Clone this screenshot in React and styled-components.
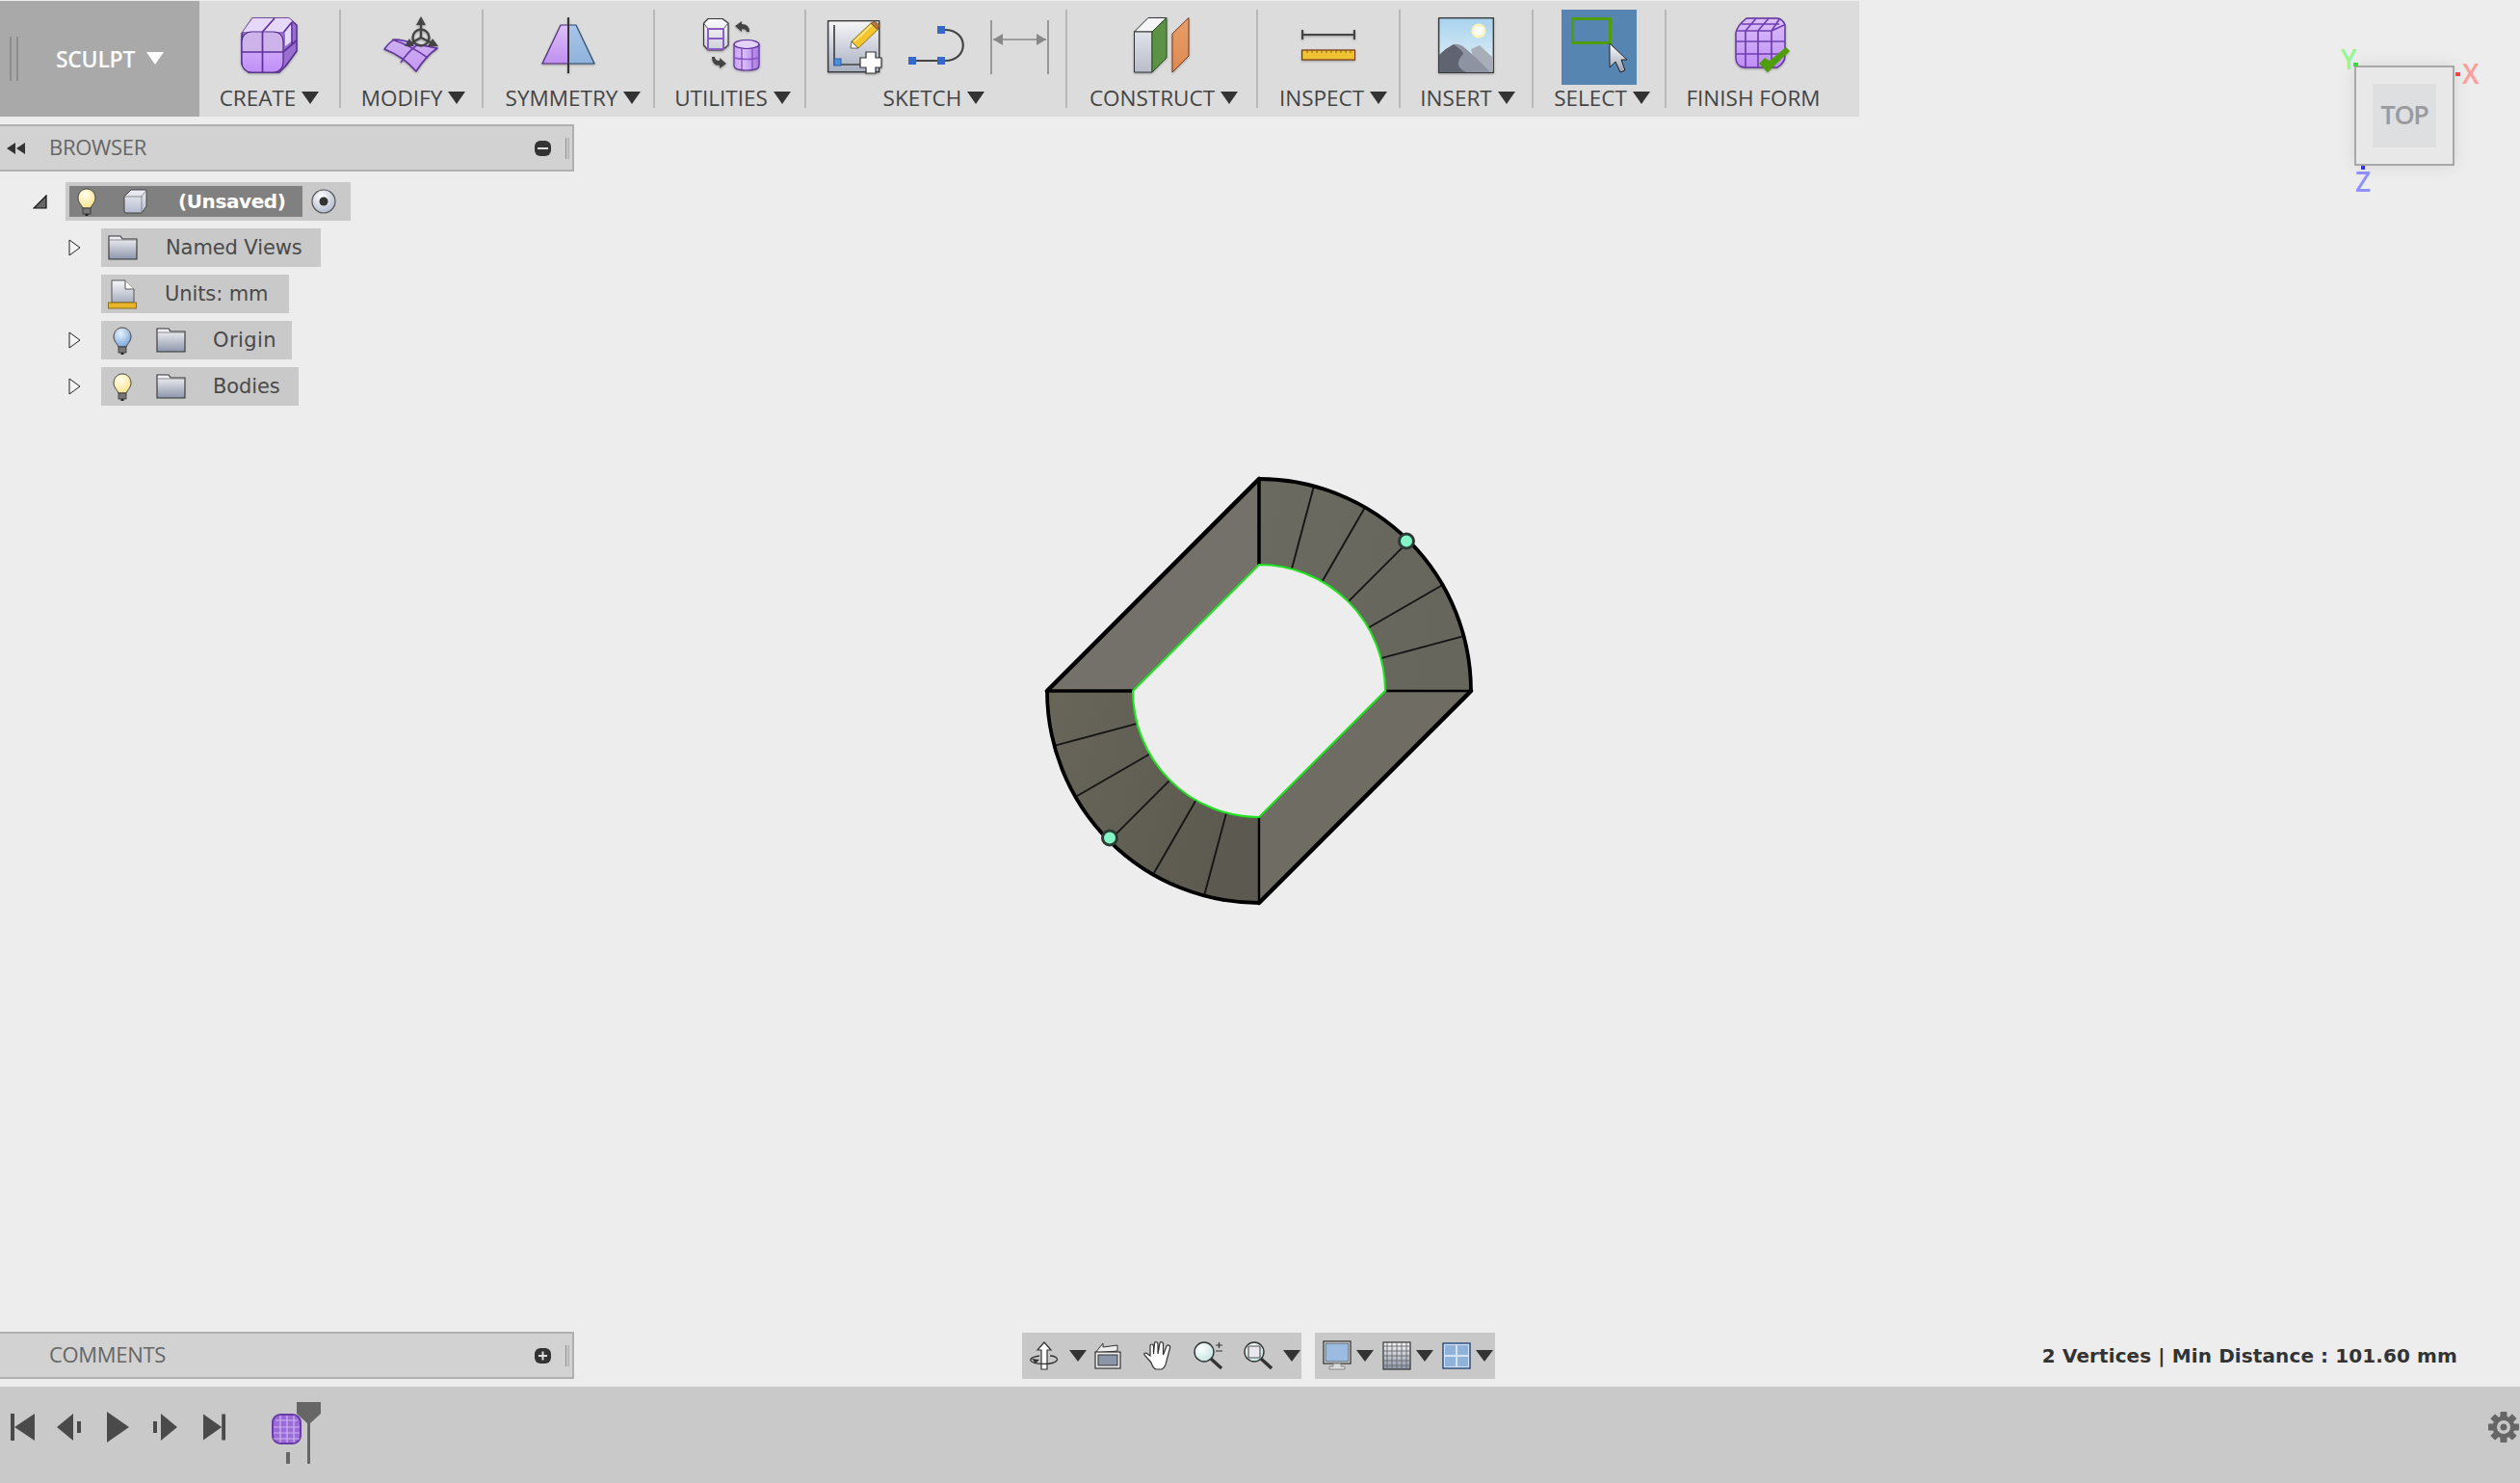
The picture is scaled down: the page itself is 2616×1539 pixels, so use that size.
import React from "react";
import styled, { createGlobalStyle } from "styled-components";

const Global = createGlobalStyle`
  html, body { margin: 0; padding: 0; background: #ededed; }
  #root { width: 2616px; height: 1539px; overflow: hidden; }
`;

const UI = `"Open Sans", "Noto Sans", "Liberation Sans", sans-serif`;
const TREE = `"DejaVu Sans", "Open Sans", sans-serif`;

const Page = styled.div`
  position: relative;
  width: 2616px;
  height: 1539px;
  display: flex;
  flex-direction: column;
  background: #ededed;
  overflow: hidden;
  font-family: ${UI};
`;
const Toolbar = styled.div`
  margin-top: 1px;
  width: 1930px;
  height: 120px;
  flex: none;
  display: flex;
  background: #dcdcdc;
`;
const WorkspaceTab = styled.div`
  width: 207px;
  display: flex;
  align-items: center;
  background: #a9a9a9;
  padding: 0 0 1px 10px;
  box-sizing: border-box;
`;
const Grip = styled.div`
  width: 5px;
  height: 46px;
  border-left: 2px solid #8d8d8d;
  border-right: 2px solid #8d8d8d;
  margin-right: 39px;
`;
const TabLabel = styled.span`
  color: #fff;
  font-size: 23px;
  font-weight: 600;
  letter-spacing: -0.3px;
  white-space: nowrap;
`;
const TabCaret = styled.span`
  width: 0;
  height: 0;
  margin-left: 12px;
  border-left: 9px solid transparent;
  border-right: 9px solid transparent;
  border-top: 13px solid #fff;
`;
const Group = styled.div`
  width: ${(p) => p.$w}px;
  margin: 9px 0;
  box-sizing: border-box;
  display: flex;
  flex-direction: column;
  align-items: center;
  border-right: ${(p) => (p.$last ? "0" : "2px solid #b8b8b8")};
`;
const IconRow = styled.div`
  height: 80px;
  box-sizing: border-box;
  padding-top: ${(p) => p.$top ?? 8}px;
  padding-left: ${(p) => p.$left ?? 0}px;
  display: flex;
  justify-content: center;
  align-items: flex-start;
  gap: ${(p) => p.$gap ?? 0}px;
`;
const CurveSlot = styled.span`
  display: flex;
  flex: none;
  margin-top: 5px;
`;
const SelectTile = styled.div`
  width: 78px;
  height: 78px;
  background: #5585b0;
`;
const GroupLabel = styled.div`
  display: flex;
  align-items: center;
  height: 22px;
  margin-left: ${(p) => p.$nudge || 0}px;
  margin-right: ${(p) => p.$shift || 0}px;
  color: #444;
  font-size: 22.5px;
  white-space: nowrap;
`;
const Caret = styled.span`
  width: 0;
  height: 0;
  margin-left: 6px;
  border-left: 9px solid transparent;
  border-right: 9px solid transparent;
  border-top: 13px solid #333;
`;
const Ico = styled.svg`
  flex: none;
  filter: drop-shadow(0 1px 1px rgba(0, 0, 0, 0.3));
`;
const Main = styled.div`
  flex: 1;
  display: flex;
  flex-direction: column;
  justify-content: space-between;
`;
const Panel = styled.div`
  width: 596px;
  height: 49px;
  box-sizing: border-box;
  display: flex;
  align-items: center;
  background: #d2d2d2;
  border: 2px solid #b0b0b0;
  border-left: 0;
  color: #666;
  font-size: 22px;
  letter-spacing: -0.3px;
`;
const PanelLead = styled.div`
  width: 51px;
  display: flex;
  padding-left: 7px;
  box-sizing: border-box;
`;
const PanelTitle = styled.span`
  flex: 1;
  padding-bottom: ${(p) => p.$lift || 3}px;
`;
const PanelGrip = styled.div`
  width: 1px;
  height: 22px;
  margin: 0 3px 0 15px;
  border-left: 1px solid #8f8f8f;
  border-right: 2px solid #b8b8b8;
`;
const BrowserWrap = styled.div`
  margin-top: 8px;
`;
const Tree = styled.div`
  display: flex;
  flex-direction: column;
  gap: 8px;
  padding-top: 11px;
  font-family: ${TREE};
`;
const TreeRow = styled.div`
  height: 40px;
  display: flex;
  align-items: center;
  padding-left: ${(p) => p.$indent}px;
`;
const Expander = styled.div`
  width: 34px;
  flex: none;
  display: flex;
  align-items: center;
`;
const Chip = styled.div`
  height: 40px;
  display: flex;
  align-items: center;
  box-sizing: border-box;
  background: #c9c9c9;
  padding: ${(p) => p.$pad || "0 20px 0 7px"};
  color: #4a4a4a;
  font-size: 21px;
  letter-spacing: ${(p) => p.$ls ?? -0.1}px;
`;
const ActiveChip = styled.div`
  width: 242px;
  height: 32px;
  display: flex;
  align-items: center;
  box-sizing: border-box;
  padding-left: 8px;
  background: #808080;
  color: #fff;
  font-weight: 700;
  font-size: 20px;
  letter-spacing: -0.4px;
  margin-right: 9px;
`;
const Gap = styled.span`
  display: inline-block;
  flex: none;
  width: ${(p) => p.$w}px;
`;
const BottomRow = styled.div`
  height: 49px;
  margin-bottom: 8px;
  display: flex;
  align-items: center;
`;
const NavStrip = styled.div`
  height: 48px;
  margin-left: ${(p) => p.$ml}px;
  padding: 0 ${(p) => p.$pr || 0}px 0 ${(p) => p.$pl}px;
  display: flex;
  align-items: center;
  background: #c8c8c8;
`;
const NavCaret = styled.span`
  flex: none;
  width: 0;
  height: 0;
  margin-left: ${(p) => p.$ml}px;
  border-left: 9px solid transparent;
  border-right: 9px solid transparent;
  border-top: 12px solid #333;
`;
const NavIcon = styled.span`
  display: flex;
  flex: none;
  margin-left: ${(p) => p.$ml || 0}px;
`;
const Status = styled.div`
  margin-left: auto;
  margin-right: 65px;
  color: #333;
  font-family: ${TREE};
  font-weight: 700;
  font-size: 20px;
  letter-spacing: 0.1px;
  white-space: nowrap;
`;
const Footer = styled.div`
  height: 100px;
  flex: none;
  display: flex;
  align-items: flex-start;
  box-sizing: border-box;
  padding: 26px 1px 0 11px;
  background: #c9c9c9;
`;
const Transport = styled.div`
  width: ${(p) => p.$w}px;
  height: 32px;
  display: flex;
  align-items: center;
`;
const TimelineTrack = styled.div`
  position: relative;
  margin-left: 47px;
  margin-top: 2px;
  width: 31px;
  height: 52px;
`;
const TimelineTick = styled.div`
  position: absolute;
  left: 15px;
  top: 40px;
  width: 4px;
  height: 12px;
  background: #666;
`;
const Marker = styled.div`
  position: absolute;
  left: 26px;
  top: -12px;
`;
const GearWrap = styled.div`
  margin-left: auto;
`;
const Model = styled.svg`
  position: absolute;
  left: 1080px;
  top: 490px;
`;
const HiddenDefs = styled.svg`
  position: absolute;
`;
const ViewCube = styled.div`
  position: absolute;
  left: 2444px;
  top: 68px;
  width: 104px;
  height: 104px;
  box-sizing: border-box;
  display: flex;
  align-items: center;
  justify-content: center;
  border: 2px solid #a8a8a8;
  background: #e8e8e8;
  box-shadow: 0 0 16px rgba(0, 0, 0, 0.1);
`;
const CubeFace = styled.div`
  width: 66px;
  height: 66px;
  box-sizing: border-box;
  padding-bottom: 3px;
  display: flex;
  align-items: center;
  justify-content: center;
  background: #dddfe1;
  color: #999b9d;
  font-size: 27px;
  font-weight: 600;
  letter-spacing: -1.4px;
`;
const Axis = styled.span`
  position: absolute;
  left: ${(p) => p.$x}px;
  top: ${(p) => p.$y}px;
  color: ${(p) => p.$c};
  font-size: 28px;
  line-height: 28px;
  font-weight: 600;
`;
const AxisTick = styled.i`
  position: absolute;
  left: ${(p) => p.$x}px;
  top: ${(p) => p.$y}px;
  width: ${(p) => p.$w}px;
  height: ${(p) => p.$h}px;
  background: ${(p) => p.$c};
`;

const Defs = () => (
  <HiddenDefs width="0" height="0">
    <defs>
      <linearGradient id="pv" x1="0" y1="0" x2="0" y2="1">
        <stop offset="0" stopColor="#d9bffa" />
        <stop offset="1" stopColor="#c08ef8" />
      </linearGradient>
      <linearGradient id="pcyl" x1="0" y1="0" x2="1" y2="0">
        <stop offset="0" stopColor="#c79cf6" />
        <stop offset="0.35" stopColor="#dcc2fb" />
        <stop offset="1" stopColor="#a877e4" />
      </linearGradient>
      <linearGradient id="surf" x1="0" y1="0" x2="0" y2="1">
        <stop offset="0" stopColor="#ceb2f0" />
        <stop offset="1" stopColor="#c596f2" />
      </linearGradient>
      <linearGradient id="white" x1="0" y1="0" x2="0" y2="1">
        <stop offset="0" stopColor="#fbfbfc" />
        <stop offset="1" stopColor="#cdd0d9" />
      </linearGradient>
      <linearGradient id="folder" x1="0" y1="0" x2="0" y2="1">
        <stop offset="0" stopColor="#f8f8fa" />
        <stop offset="1" stopColor="#8d96ab" />
      </linearGradient>
      <linearGradient id="paper" x1="0" y1="0" x2="0" y2="1">
        <stop offset="0" stopColor="#f7f7f9" />
        <stop offset="1" stopColor="#a7aec0" />
      </linearGradient>
      <linearGradient id="cube" x1="0" y1="0" x2="0" y2="1">
        <stop offset="0" stopColor="#eef0f5" />
        <stop offset="1" stopColor="#b4bccd" />
      </linearGradient>
      <linearGradient id="front" x1="0" y1="0" x2="0" y2="1">
        <stop offset="0" stopColor="#e0e3e9" />
        <stop offset="1" stopColor="#b8bdca" />
      </linearGradient>
      <linearGradient id="orange" x1="0" y1="0" x2="0" y2="1">
        <stop offset="0" stopColor="#ea9e68" />
        <stop offset="1" stopColor="#dd8a52" />
      </linearGradient>
      <linearGradient id="sky" x1="0" y1="0" x2="0" y2="1">
        <stop offset="0" stopColor="#a9d3ee" />
        <stop offset="1" stopColor="#e6f2f8" />
      </linearGradient>
      <linearGradient id="cursor" x1="0" y1="0" x2="0" y2="1">
        <stop offset="0" stopColor="#ffffff" />
        <stop offset="1" stopColor="#98a1b0" />
      </linearGradient>
      <linearGradient id="symL" x1="0" y1="0" x2="0" y2="1">
        <stop offset="0" stopColor="#dcc0f8" />
        <stop offset="1" stopColor="#c08ff0" />
      </linearGradient>
      <linearGradient id="symR" x1="0" y1="0" x2="0" y2="1">
        <stop offset="0" stopColor="#a9c5e8" />
        <stop offset="1" stopColor="#8fb3dc" />
      </linearGradient>
      <radialGradient id="yb" cx="0.4" cy="0.3" r="0.7">
        <stop offset="0" stopColor="#fffdf0" />
        <stop offset="1" stopColor="#fbe58f" />
      </radialGradient>
      <radialGradient id="bb" cx="0.4" cy="0.3" r="0.7">
        <stop offset="0" stopColor="#e9f2fb" />
        <stop offset="1" stopColor="#7da9dc" />
      </radialGradient>
      <radialGradient id="radio" cx="0.4" cy="0.3" r="0.8">
        <stop offset="0" stopColor="#ffffff" />
        <stop offset="1" stopColor="#aab2c6" />
      </radialGradient>
      <radialGradient id="lens" cx="0.35" cy="0.3" r="0.8">
        <stop offset="0" stopColor="#ffffff" />
        <stop offset="1" stopColor="#bfe3dd" />
      </radialGradient>
    </defs>
  </HiddenDefs>
);

const CreateIcon = () => (
  <Ico width="59" height="58" viewBox="0 0 59 58">
    <path d="M12 1H50L58 8V35L47 50L40 57H8L1 48V17Z" fill="#9a6ecf" stroke="#4e2a86" strokeWidth="1.4" strokeLinejoin="round" />
    <path d="M12 1H50Q54 3 54 8V24L46 30V18Q46 15 42 15H4Q2 15 1.500 16Z" fill="#e6d8fa" />
    <rect x="1" y="15" width="43" height="42" rx="10" fill="url(#pv)" stroke="#4e2a86" strokeWidth="1.2" />
    <path d="M3 25Q3 16 12 16H34Q43 16 43 25V36H3Z" fill="#cdb3ea" />
    <path d="M1 36H44L58 24M22.500 15V57M22.500 15L35 1M44 16L53 5M53 5V29" fill="none" stroke="#5d2f99" strokeWidth="1.7" />
  </Ico>
);
const ModifyIcon = () => (
  <Ico width="58" height="58" viewBox="0 0 58 58">
    <path d="M1 34Q5 28 11 24Q20 24 30 28Q45 31 56 33Q45 40 34 57Q20 41 1 34Z" fill="url(#surf)" stroke="#5d2f99" strokeWidth="1.5" strokeLinejoin="round" />
    <path d="M9 24Q28 30 46 43M36 29Q26 36 18 48" fill="none" stroke="#6b3aa8" strokeWidth="1.6" />
    <g fill="none" stroke="#444" strokeWidth="2.4">
      <circle cx="39" cy="22" r="8.500" />
      <path d="M39 6V22L28 28M39 22L51 28" />
    </g>
    <g fill="#444">
      <path d="M39 0L44 9H34Z" />
      <path d="M22 31L27 23L32 31Z" />
      <path d="M57 31L46 31L51 23Z" />
    </g>
  </Ico>
);
const SymmetryIcon = () => (
  <Ico width="56" height="58" viewBox="0 0 56 58">
    <path d="M20 8H28V48H1Z" fill="url(#symL)" stroke="#4b2a7a" strokeWidth="1.2" />
    <path d="M36 8H28V48H55Z" fill="url(#symR)" stroke="#2e4a70" strokeWidth="1.2" />
    <rect x="27" y="0" width="2" height="58" fill="#333" />
  </Ico>
);
const UtilitiesIcon = () => (
  <Ico width="59" height="56" viewBox="0 0 59 56">
    <path d="M5 0.500H20L26 5V28L20 33H5L0.500 28V5Z" fill="url(#white)" stroke="#333" strokeWidth="1.2" />
    <path d="M0.500 5L5 11H21L26 5M5 11V33M21 11V33" fill="none" stroke="#555" strokeWidth="1" />
    <path d="M5 11H21V32H5ZM5 21H21" fill="none" stroke="#8b5cc4" strokeWidth="1.8" />
    <path d="M32 27V49Q32 54 45 54Q58 54 58 49V27Z" fill="url(#pcyl)" stroke="#5d2f99" strokeWidth="1.2" />
    <ellipse cx="45" cy="27" rx="13" ry="4.500" fill="#e3d2fa" stroke="#5d2f99" strokeWidth="1.2" />
    <path d="M32 41Q45 44 58 41M40 30V53M51 30V53" fill="none" stroke="#8a55c6" strokeWidth="1.5" />
    <path d="M33 8L40 3V6Q48 6 48 14H45Q45 11 40 11V14Z" fill="#444" />
    <path d="M24 47L17 52V49Q9 49 9 40H12Q12 44 17 44V41Z" fill="#444" />
  </Ico>
);
const SketchPaperIcon = () => (
  <Ico width="57" height="56" viewBox="0 0 57 56">
    <rect x="0.700" y="0.700" width="53" height="53" fill="url(#paper)" stroke="#333" strokeWidth="1.3" />
    <path d="M7 5V46H36" fill="none" stroke="#444" strokeWidth="1.7" />
    <rect x="7" y="40" width="7" height="7" fill="#4a90d8" stroke="#2f5fa8" strokeWidth="1" />
    <path d="M25 22L45 3L52 10L32 29Z" fill="#f4c52c" stroke="#7a5a10" strokeWidth="0.8" />
    <path d="M28 22L46 5" stroke="#fff0a0" strokeWidth="1.4" />
    <path d="M45 3L49 1L54 5L52 10Z" fill="#b5753f" stroke="#6e4522" strokeWidth="0.7" />
    <path d="M24 29L25 22L32 29Z" fill="#fbf6ea" stroke="#444" strokeWidth="0.8" />
    <path d="M40 33H50V39H56V49H50V55H40V49H34V39H40Z" fill="#fff" stroke="#333" strokeWidth="1.2" />
  </Ico>
);
const SketchCurveIcon = () => (
  <svg width="58" height="42" viewBox="0 0 58 42">
    <path d="M34 5H38C63 5 63 37 38 37H4" fill="none" stroke="#444" strokeWidth="2.200" />
    <rect x="30" y="1" width="8" height="8" fill="#3568c8" />
    <rect x="30" y="33" width="8" height="8" fill="#3568c8" />
    <rect x="0" y="33" width="8" height="8" fill="#3568c8" />
  </svg>
);
const SketchDimIcon = () => (
  <svg width="62" height="56" viewBox="0 0 62 56">
    <path d="M1 0V56M60 0V56M3 20H58" stroke="#888" strokeWidth="1.6" fill="none" />
    <path d="M3 20L13 14V26ZM58 20L48 14V26Z" fill="#888" />
  </svg>
);
const ConstructIcon = () => (
  <Ico width="58" height="58" viewBox="0 0 58 58">
    <path d="M0.500 15L15 0.500H34L19 15Z" fill="#f6f6f8" stroke="#333" strokeWidth="1" />
    <path d="M0.500 15H19V57H0.500Z" fill="url(#front)" stroke="#333" strokeWidth="1" />
    <path d="M19 15L34 0.500V42L19 57Z" fill="#5b9245" stroke="#2e5020" strokeWidth="1" />
    <path d="M40 17L57 0.500V40L40 57Z" fill="url(#orange)" stroke="#7a3a18" strokeWidth="1" />
  </Ico>
);
const InspectIcon = () => (
  <Ico width="56" height="32" viewBox="0 0 56 32">
    <path d="M1 0V10M55 0V10M1 5H55" stroke="#444" strokeWidth="2.200" fill="none" />
    <rect x="0.600" y="21" width="55" height="10" fill="#eec233" stroke="#7a3412" strokeWidth="1.2" />
    <path d="M6 21v3M11 21v3M16 21v3M21 21v3M26 21v3M31 21v3M36 21v3M41 21v3M46 21v3M51 21v3" stroke="#7a5a12" strokeWidth="0.9" />
  </Ico>
);
const InsertIcon = () => (
  <Ico width="58" height="58" viewBox="0 0 58 58">
    <rect x="0.700" y="0.700" width="56.600" height="56.600" fill="url(#sky)" stroke="#333" strokeWidth="1.3" />
    <circle cx="42" cy="14" r="7.500" fill="#fff4b8" />
    <circle cx="42" cy="14" r="5" fill="#ffffff" />
    <path d="M34 33L43 29L57 42V56H40Z" fill="#a8aeb8" />
    <path d="M1 39Q8 32 16 28Q22 27 28 32Q40 42 54 57H1Z" fill="#8d93a0" />
    <path d="M1 39Q8 32 16 28Q27 36 26 38Q20 44 21 50Q23 54 29 57H1Z" fill="#5f6470" />
  </Ico>
);
const SelectIcon = () => (
  <svg width="78" height="78" viewBox="0 0 78 78">
    <rect x="11.500" y="9.500" width="39" height="25" fill="none" stroke="#4f9d07" strokeWidth="3" />
    <path d="M50 35V60L56 54L61 65L66 63L62 52L68 52Z" fill="url(#cursor)" stroke="#222" strokeWidth="1" strokeLinejoin="round" />
  </svg>
);
const FinishIcon = () => (
  <Ico width="58" height="58" viewBox="0 0 58 58">
    <path d="M12 1H44Q50 2 52 8V40Q52 47 44 52H10Q1 51 1 42V16Q2 9 12 1Z" fill="url(#pv)" stroke="#5d2f99" strokeWidth="1.4" />
    <path d="M1 14H38V52M1 25H52M1 38H52M11 14V52M24 14V52M38 14L51 8M11 14L22 1M24 14L35 1M38 14L46 2M7 7H46" fill="none" stroke="#6f3fb0" strokeWidth="1.7" />
    <path d="M25 48L34 57L57 35L53 31L36 45L31 42Z" fill="#4f9d07" />
  </Ico>
);

const Bulb = ({ blue }) => (
  <svg width="20" height="29" viewBox="0 0 20 29">
    <path d="M10 1C4 1 1 6 1 11C1 15 5 18 6 21H14C15 18 19 15 19 11C19 6 16 1 10 1Z" fill={blue ? "url(#bb)" : "url(#yb)"} stroke="#444" strokeWidth="1" />
    <rect x="6" y="21" width="8" height="6" fill="#777" stroke="#333" strokeWidth="0.8" />
    <rect x="8.500" y="27" width="3" height="2" fill="#222" />
  </svg>
);
const Folder = () => (
  <svg width="31" height="26" viewBox="0 0 31 26">
    <path d="M1 1H13L15 4H30V25H1Z" fill="url(#folder)" stroke="#333" strokeWidth="1.1" />
    <path d="M1 5H30" stroke="#777" strokeWidth="0.8" />
  </svg>
);
const UnitsDoc = () => (
  <svg width="30" height="31" viewBox="0 0 30 31">
    <path d="M4 1H18L27 10V24H4Z" fill="url(#paper)" stroke="#555" strokeWidth="1" />
    <path d="M18 1V10H27" fill="#fff" stroke="#555" strokeWidth="1" />
    <rect x="0.500" y="24" width="29" height="6" fill="#e8b52a" stroke="#8b6d1d" strokeWidth="1" />
  </svg>
);
const Cube = () => (
  <svg width="25" height="26" viewBox="0 0 25 26">
    <path d="M8 1H24V18L19 25H3Q1 25 1 23V8Z" fill="url(#cube)" stroke="#444" strokeWidth="1" />
    <path d="M1 8H19V25M19 8L24 1" fill="none" stroke="#777" strokeWidth="0.8" />
  </svg>
);
const Radio = () => (
  <svg width="26" height="26" viewBox="0 0 26 26">
    <circle cx="13" cy="13" r="12" fill="url(#radio)" stroke="#555" strokeWidth="1.2" />
    <circle cx="13" cy="13" r="4.500" fill="#333" />
  </svg>
);
const Tri = () => (
  <svg width="13" height="18" viewBox="0 0 13 18">
    <path d="M1 1L12 9L1 17Z" fill="#f4f4f4" stroke="#222" strokeWidth="1" />
  </svg>
);
const TriOpen = () => (
  <svg width="15" height="15" viewBox="0 0 15 15">
    <path d="M14 1V14H1Z" fill="#666" stroke="#111" strokeWidth="1.2" />
  </svg>
);
const Rewind = () => (
  <svg width="19" height="12" viewBox="0 0 19 12">
    <path d="M0 6L9 0V12ZM10 6L19 0V12Z" fill="#333" />
  </svg>
);
const PillIcon = ({ plus }) => (
  <svg width="17" height="16" viewBox="0 0 17 16">
    <rect x="0" y="0" width="17" height="16" rx="6" fill="#333" />
    <path d={plus ? "M4 8H13M8.500 3.500V12.500" : "M3 8H14"} stroke="#ddd" strokeWidth="2" />
  </svg>
);

const OrbitIcon = () => (
  <svg width="30" height="30" viewBox="0 0 30 30">
    <path d="M15 1L22 9H18V29H12V9H8Z" fill="#fff" stroke="#333" strokeWidth="1.2" />
    <path d="M10 15C3 16 0 18 1 20C3 24 24 25 28 20C30 17 25 15 21 15" fill="none" stroke="#333" strokeWidth="1.3" />
    <path d="M6 23L2 18L10 19Z" fill="#333" />
  </svg>
);
const CameraIcon = () => (
  <svg width="28" height="28" viewBox="0 0 28 28">
    <path d="M1 11L9 1V5L24 3V9L1 11Z" fill="#eee" stroke="#333" strokeWidth="1" />
    <rect x="1" y="10" width="26" height="17" fill="#eee" stroke="#333" strokeWidth="1.2" />
    <rect x="4" y="13" width="20" height="11" fill="#8d96a8" stroke="#333" strokeWidth="1" />
  </svg>
);
const HandIcon = () => (
  <svg width="30" height="30" viewBox="0 0 30 30">
    <path d="M8 22L1 14Q0 12 3 12L7 15V5Q7 3 9 3Q10 3 10.500 5V13L11.500 2Q12 0 14 1Q15 1.500 15 3V13L17 2Q17.500 0 19.500 1Q21 2 20.500 4V14L24 5Q25 3 27 4.500Q28 5.500 27.500 7L24 20Q23 27 19 29H13Q10 28 8 22Z" fill="#fff" stroke="#333" strokeWidth="1.2" />
  </svg>
);
const ZoomIcon = () => (
  <svg width="31" height="30" viewBox="0 0 31 30">
    <circle cx="11" cy="11" r="10" fill="url(#lens)" stroke="#333" strokeWidth="1.4" />
    <path d="M18 18L29 28" stroke="#333" strokeWidth="3.400" />
    <path d="M23 4H30M26.500 1V7M23 10H30" stroke="#333" strokeWidth="1.2" fill="none" />
  </svg>
);
const FitIcon = () => (
  <svg width="30" height="30" viewBox="0 0 30 30">
    <circle cx="11" cy="11" r="10" fill="url(#lens)" stroke="#333" strokeWidth="1.4" />
    <rect x="5" y="5" width="12" height="12" rx="1" fill="#e8e8ee" stroke="#555" strokeWidth="1.2" />
    <path d="M18 18L29 28" stroke="#333" strokeWidth="3.400" />
  </svg>
);
const MonitorIcon = () => (
  <svg width="30" height="31" viewBox="0 0 30 31">
    <rect x="1" y="1" width="28" height="23" fill="#fff" stroke="#222" strokeWidth="1.2" />
    <rect x="3" y="3" width="24" height="19" fill="#9bbce0" stroke="#444" strokeWidth="0.8" />
    <path d="M11 24H19V27H23V30H7V27H11Z" fill="#ddd" stroke="#777" strokeWidth="0.8" />
  </svg>
);
const GridIcon = () => {
  const lines = [5, 10, 15, 20, 25];
  return (
    <svg width="30" height="30" viewBox="0 0 30 30">
      <rect x="1" y="1" width="28" height="28" fill="url(#folder)" stroke="#333" strokeWidth="1.2" />
      {lines.map((v) => (
        <path key={v} d={`M${v} 1V29M1 ${v}H29`} stroke="#666" strokeWidth="0.9" />
      ))}
    </svg>
  );
};
const LayoutIcon = () => (
  <svg width="30" height="28" viewBox="0 0 30 28">
    <rect x="1" y="1" width="28" height="26" fill="#d5e3f2" stroke="#25477a" strokeWidth="1.4" />
    <path d="M3 3H14V13H3ZM16 3H27V13H16ZM3 15H14V25H3ZM16 15H27V25H16Z" fill="#8fb2da" />
  </svg>
);

const TransportIcon = ({ d, w = 25, h = 28 }) => (
  <svg width={w} height={h} viewBox={`0 0 ${w} ${h}`}>
    <path d={d} fill="#4a4a4a" />
  </svg>
);
const MiniMesh = () => (
  <svg width="31" height="32" viewBox="0 0 31 32">
    <rect x="1" y="1" width="29" height="30" rx="8" fill="#9b6bd8" stroke="#6a3aa8" strokeWidth="2" />
    <path d="M4 7H27M2 14H29M2 20H29M2 26H29M9 2V30M16 2V30M23 2V30" stroke="#cdb4ef" strokeWidth="1.2" />
  </svg>
);
const MarkerIcon = () => (
  <svg width="25" height="64" viewBox="0 0 25 64">
    <path d="M0 0H25V12L14 22V64H11V22L0 12Z" fill="#666" />
  </svg>
);
const Gear = () => (
  <svg width="32" height="32" viewBox="0 0 32 32">
    {[0, 45, 90, 135].map((a) => (
      <rect key={a} x="12.500" y="0" width="7" height="32" rx="1" fill="#666" transform={`rotate(${a} 16 16)`} />
    ))}
    <circle cx="16" cy="16" r="11.500" fill="#666" />
    <circle cx="16" cy="16" r="7" fill="#c9c9c9" />
    <circle cx="16" cy="16" r="3.500" fill="#666" />
  </svg>
);

const CX = 1307;
const CY = 717;
const R1 = 131;
const R2 = 220;
const spokes = [15, 30, 45, 60, 75, 195, 210, 225, 240, 255].map((a) => {
  const r = (a * Math.PI) / 180;
  return {
    a,
    x1: CX + R1 * Math.sin(r),
    y1: CY - R1 * Math.cos(r),
    x2: CX + R2 * Math.sin(r),
    y2: CY - R2 * Math.cos(r),
  };
});

const ModelView = () => (
  <Model width="455" height="455" viewBox="1080 490 455 455">
    <defs>
      <linearGradient id="armA" x1="0" y1="0" x2="1" y2="0.2">
        <stop offset="0" stopColor="#6b6a60" />
        <stop offset="1" stopColor="#67665c" />
      </linearGradient>
      <linearGradient id="armB" x1="0" y1="0" x2="1" y2="0.3">
        <stop offset="0" stopColor="#686659" />
        <stop offset="1" stopColor="#5c5a50" />
      </linearGradient>
    </defs>
    <path d={`M${CX} ${CY - R2}A${R2} ${R2} 0 0 1 ${CX + R2} ${CY}H${CX + R1}A${R1} ${R1} 0 0 0 ${CX} ${CY - R1}Z`} fill="url(#armA)" />
    <path d={`M${CX} ${CY + R2}A${R2} ${R2} 0 0 1 ${CX - R2} ${CY}H${CX - R1}A${R1} ${R1} 0 0 0 ${CX} ${CY + R1}Z`} fill="url(#armB)" />
    <path d={`M${CX} ${CY - R2}L${CX - R2} ${CY}H${CX - R1}L${CX} ${CY - R1}Z`} fill="#74716a" />
    <path d={`M${CX} ${CY + R2}L${CX + R2} ${CY}H${CX + R1}L${CX} ${CY + R1}Z`} fill="#6f6c63" />
    {spokes.map((s) => (
      <line key={s.a} x1={s.x1} y1={s.y1} x2={s.x2} y2={s.y2} stroke="#151515" strokeWidth="1.9" />
    ))}
    <path d={`M${CX} ${CY - R2}V${CY - R1}M${CX - R2} ${CY}H${CX - R1}`} stroke="#000" strokeWidth="3.500" />
    <path d={`M${CX} ${CY + R2}V${CY + R1}M${CX + R2} ${CY}H${CX + R1}`} stroke="#000" strokeWidth="2.400" />
    <path d={`M${CX} ${CY - R2}L${CX - R2} ${CY}M${CX} ${CY + R2}L${CX + R2} ${CY}`} fill="none" stroke="#000" strokeWidth="4.500" strokeLinecap="round" />
    <path d={`M${CX} ${CY - R2}A${R2} ${R2} 0 0 1 ${CX + R2} ${CY}M${CX} ${CY + R2}A${R2} ${R2} 0 0 1 ${CX - R2} ${CY}`} fill="none" stroke="#000" strokeWidth="3.800" />
    <path d={`M${CX} ${CY - R1}A${R1} ${R1} 0 0 1 ${CX + R1} ${CY}L${CX} ${CY + R1}A${R1} ${R1} 0 0 1 ${CX - R1} ${CY}Z`} fill="#ededed" stroke="#1fe31f" strokeWidth="2.100" />
    {[[1460, 561.5], [1152, 869.5]].map(([x, y]) => (
      <circle key={x} cx={x} cy={y} r="7.500" fill="#84f5c6" stroke="#2c3a34" strokeWidth="3" />
    ))}
  </Model>
);

export default function App() {
  return (
    <Page>
      <Global />
      <Defs />
      <Toolbar>
        <WorkspaceTab>
          <Grip />
          <TabLabel>SCULPT</TabLabel>
          <TabCaret />
        </WorkspaceTab>
        <Group $w={147}><IconRow><CreateIcon /></IconRow><GroupLabel>CREATE<Caret /></GroupLabel></Group>
        <Group $w={148}><IconRow $top={7}><ModifyIcon /></IconRow><GroupLabel $nudge={4}>MODIFY<Caret /></GroupLabel></Group>
        <Group $w={178}><IconRow><SymmetryIcon /></IconRow><GroupLabel $nudge={10}>SYMMETRY<Caret /></GroupLabel></Group>
        <Group $w={157}><IconRow $left={3} $top={9}><UtilitiesIcon /></IconRow><GroupLabel $nudge={6}>UTILITIES<Caret /></GroupLabel></Group>
        <Group $w={271}>
          <IconRow $top={11} $left={5} $gap={27}>
            <SketchPaperIcon />
            <CurveSlot><SketchCurveIcon /></CurveSlot>
            <SketchDimIcon />
          </IconRow>
          <GroupLabel $shift={4}>SKETCH<Caret /></GroupLabel>
        </Group>
        <Group $w={198}><IconRow><ConstructIcon /></IconRow><GroupLabel $nudge={4}>CONSTRUCT<Caret /></GroupLabel></Group>
        <Group $w={148}><IconRow $top={21}><InspectIcon /></IconRow><GroupLabel $nudge={10}>INSPECT<Caret /></GroupLabel></Group>
        <Group $w={138}><IconRow><InsertIcon /></IconRow><GroupLabel $nudge={3}>INSERT<Caret /></GroupLabel></Group>
        <Group $w={138}><IconRow $top={0}><SelectTile><SelectIcon /></SelectTile></IconRow><GroupLabel $nudge={6}>SELECT<Caret /></GroupLabel></Group>
        <Group $w={200} $last><IconRow><FinishIcon /></IconRow><GroupLabel $shift={20}>FINISH FORM</GroupLabel></Group>
      </Toolbar>

      <Main>
        <BrowserWrap>
          <Panel>
            <PanelLead><Rewind /></PanelLead>
            <PanelTitle>BROWSER</PanelTitle>
            <PillIcon />
            <PanelGrip />
          </Panel>
          <Tree>
            <TreeRow $indent={34}>
              <Expander><TriOpen /></Expander>
              <Chip $pad="0 15px 0 4px">
                <ActiveChip>
                  <Bulb />
                  <Gap $w={28} />
                  <Cube />
                  <Gap $w={32} />
                  (Unsaved)
                </ActiveChip>
                <Radio />
              </Chip>
            </TreeRow>
            <TreeRow $indent={71}>
              <Expander><Tri /></Expander>
              <Chip $pad="0 19px 0 7px"><Folder /><Gap $w={29} />Named Views</Chip>
            </TreeRow>
            <TreeRow $indent={71}>
              <Expander />
              <Chip $pad="0 22px 0 7px"><UnitsDoc /><Gap $w={29} />Units: mm</Chip>
            </TreeRow>
            <TreeRow $indent={71}>
              <Expander><Tri /></Expander>
              <Chip $pad="0 16px 0 12px" $ls={0.4}><Bulb blue /><Gap $w={25} /><Folder /><Gap $w={28} />Origin</Chip>
            </TreeRow>
            <TreeRow $indent={71}>
              <Expander><Tri /></Expander>
              <Chip $pad="0 19px 0 12px"><Bulb /><Gap $w={25} /><Folder /><Gap $w={28} />Bodies</Chip>
            </TreeRow>
          </Tree>
        </BrowserWrap>
        <BottomRow>
          <Panel>
            <PanelLead />
            <PanelTitle $lift={4}>COMMENTS</PanelTitle>
            <PillIcon plus />
            <PanelGrip />
          </Panel>
          <NavStrip $ml={465} $pl={8} $pr={1}>
            <OrbitIcon />
            <NavCaret $ml={11} />
            <NavIcon $ml={8}><CameraIcon /></NavIcon>
            <NavIcon $ml={23}><HandIcon /></NavIcon>
            <NavIcon $ml={22}><ZoomIcon /></NavIcon>
            <NavIcon $ml={21}><FitIcon /></NavIcon>
            <NavCaret $ml={11} />
          </NavStrip>
          <NavStrip $ml={14} $pl={8} $pr={2}>
            <MonitorIcon />
            <NavCaret $ml={5} />
            <NavIcon $ml={9}><GridIcon /></NavIcon>
            <NavCaret $ml={5} />
            <NavIcon $ml={9}><LayoutIcon /></NavIcon>
            <NavCaret $ml={5} />
          </NavStrip>
          <Status>2 Vertices | Min Distance : 101.60 mm</Status>
        </BottomRow>
      </Main>

      <Footer>
        <Transport $w={48}><TransportIcon d="M0 0H4V28H0ZM25 0V28L4 14Z" /></Transport>
        <Transport $w={52}><TransportIcon w={26} d="M0 14L17 0V28ZM21 8H25V20H21Z" /></Transport>
        <Transport $w={48}><TransportIcon w={24} h={32} d="M0 0L23 16L0 32Z" /></Transport>
        <Transport $w={52}><TransportIcon d="M0 8H4V20H0ZM8 0L25 14L8 28Z" /></Transport>
        <Transport $w={24}><TransportIcon d="M0 0L20 14L0 28ZM20 0H24V28H20Z" /></Transport>
        <TimelineTrack>
          <MiniMesh />
          <TimelineTick />
          <Marker><MarkerIcon /></Marker>
        </TimelineTrack>
        <GearWrap><Gear /></GearWrap>
      </Footer>

      <ModelView />

      <ViewCube>
        <CubeFace>TOP</CubeFace>
        <Axis $x={-16} $y={-23} $c="#93f793">Y</Axis>
        <Axis $x={110} $y={-8} $c="#ff9c9c">X</Axis>
        <Axis $x={-1} $y={104} $c="#8f8fff">Z</Axis>
        <AxisTick $x={103} $y={5} $w={5} $h={4} $c="#ff4040" />
        <AxisTick $x={-3} $y={-5} $w={5} $h={4} $c="#30e030" />
        <AxisTick $x={5} $y={102} $w={4} $h={4} $c="#3030f0" />
      </ViewCube>
    </Page>
  );
}
